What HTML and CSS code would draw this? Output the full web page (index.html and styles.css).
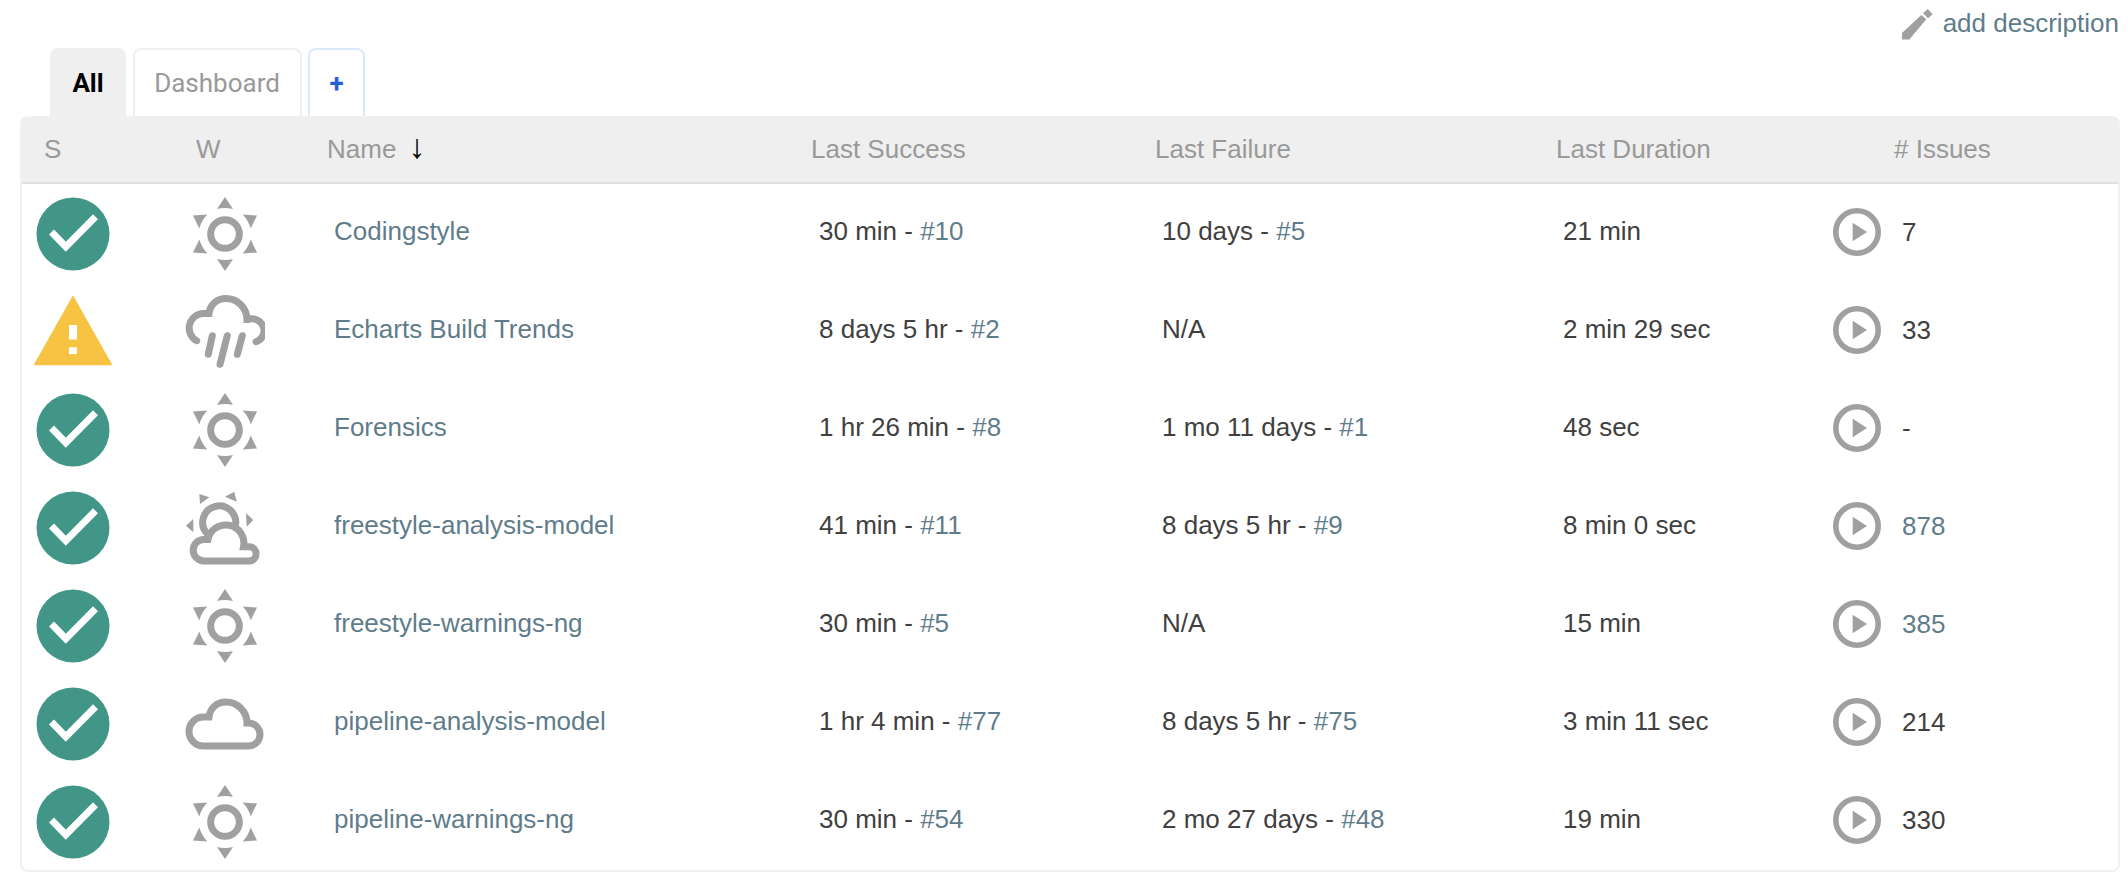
FILE: index.html
```html
<!DOCTYPE html>
<html lang="en">
<head>
    <meta charset="UTF-8">
    <title>All [Jenkins]</title>
    <link rel="stylesheet" href="styles.css">
</head>
<body>

    <svg class="sprites" width="0" height="0">
        <symbol id="ok" viewBox="0 0 80 80">
            <circle cx="40" cy="40" r="36.5" fill="#419688"/>
            <polyline points="18.5,38 32.8,52.7 62.5,22.7" fill="none" stroke="#fff" stroke-width="7"/>
        </symbol>
        <symbol id="warn" viewBox="0 0 80 80">
            <polygon points="40,3.3 79.5,73.3 0.5,73.3" fill="#f6c343"/>
            <rect x="36" y="33" width="8" height="14.5" fill="#fff"/>
            <rect x="36" y="55.3" width="8" height="6.8" fill="#fff"/>
        </symbol>
        <symbol id="sun" viewBox="0 0 80 80">
            <circle cx="40" cy="40" r="14.3" fill="none" stroke="#a0a0a0" stroke-width="7"/>
            <g fill="#a0a0a0">
                <path id="ray" d="M40 3 L48 15 Q40 13 32 15 Z"/>
                <use href="#ray" transform="rotate(60 40 40)"/>
                <use href="#ray" transform="rotate(120 40 40)"/>
                <use href="#ray" transform="rotate(180 40 40)"/>
                <use href="#ray" transform="rotate(240 40 40)"/>
                <use href="#ray" transform="rotate(300 40 40)"/>
            </g>
        </symbol>
        <symbol id="cloud" viewBox="0 0 80 80">
            <path d="M18.5 62 A14.5 14.5 0 0 1 18.5 33 H24 C25 24 32 18 41 18 A21 21 0 0 1 62 39 H63.5 A11.5 11.5 0 0 1 63.5 62 Z" fill="none" stroke="#a0a0a0" stroke-width="7"/>
        </symbol>
        <symbol id="rain" viewBox="0 0 80 80">
            <g fill="none" stroke="#a0a0a0" stroke-width="7" stroke-linecap="round">
                <path d="M11.7 48.7 A14.5 14.5 0 0 1 18.5 21.5 H24 C25 12.5 32 6.5 41 6.5 A21 21 0 0 1 62 27.5 H63.5 A11.5 11.5 0 0 1 71 49.7"/>
                <path d="M27.3 43.7 L23.3 62.3"/>
                <path d="M42.3 43.7 L35 72.3"/>
                <path d="M57.3 43.7 L52.3 62.3"/>
            </g>
        </symbol>
        <symbol id="partly" viewBox="0 0 80 80">
            <g fill="none" stroke="#a0a0a0" stroke-width="7">
                <path d="M22.5 46 A16.5 16.5 0 1 1 50.3 38"/>
                <path d="M19 73 A10.8 10.8 0 0 1 19 51.4 H23 A18 18 0 0 1 58.5 58.7 H64.8 A7.2 7.2 0 0 1 64.8 73 Z"/>
            </g>
            <g fill="#a0a0a0">
                <polygon points="14.3,6 24.3,9.3 15,16"/>
                <polygon points="40,8.7 49.3,3.7 51.7,13.7"/>
                <polygon points="61,25.3 68.3,32 61.7,38.7"/>
                <polygon points="8.3,31 1,37.7 8.3,44.3"/>
            </g>
        </symbol>
        <symbol id="play" viewBox="0 0 48 48">
            <circle cx="24" cy="24" r="21.2" fill="none" stroke="#a0a0a0" stroke-width="5.6"/>
            <polygon points="19.7,14.7 34,24 19.7,33.3" fill="#a0a0a0"/>
        </symbol>
    </svg>

    <div class="desc-row">
        <a class="add-desc">
            <svg class="pencil" viewBox="0 0 32 32">
                <polygon points="0,24 19.3,6 24.3,10.3 7.3,30.5 0,30.5" fill="#a0a0a0"/>
                <polygon points="21,4.3 25.7,0 30.7,5.3 26,9.3" fill="#a0a0a0"/>
            </svg>
            add description
        </a>
    </div>

    <div class="tabs">
        <div class="tab active">All</div>
        <div class="tab">Dashboard</div>
        <div class="tab new">+</div>
    </div>

    <table class="jobs">
        <colgroup>
            <col class="c-s"><col class="c-w"><col class="c-name"><col class="c-succ"><col class="c-fail"><col class="c-dur"><col>
        </colgroup>
        <thead>
            <tr>
                <th class="th-s">S</th>
                <th>W</th>
                <th>Name <span class="sort">↓</span></th>
                <th>Last Success</th>
                <th>Last Failure</th>
                <th>Last Duration</th>
                <th class="th-issues"># Issues</th>
            </tr>
        </thead>
        <tbody>
            <tr>
                <td class="icon"><svg class="ic"><use href="#ok"/></svg></td>
                <td class="icon"><svg class="ic"><use href="#sun"/></svg></td>
                <td><a>Codingstyle</a></td>
                <td>30 min - <a>#10</a></td>
                <td>10 days - <a>#5</a></td>
                <td>21 min</td>
                <td class="issues"><div class="issue-box"><svg class="play"><use href="#play"/></svg>7</div></td>
            </tr>
            <tr>
                <td class="icon"><svg class="ic"><use href="#warn"/></svg></td>
                <td class="icon"><svg class="ic"><use href="#rain"/></svg></td>
                <td><a>Echarts Build Trends</a></td>
                <td>8 days 5 hr - <a>#2</a></td>
                <td>N/A</td>
                <td>2 min 29 sec</td>
                <td class="issues"><div class="issue-box"><svg class="play"><use href="#play"/></svg>33</div></td>
            </tr>
            <tr>
                <td class="icon"><svg class="ic"><use href="#ok"/></svg></td>
                <td class="icon"><svg class="ic"><use href="#sun"/></svg></td>
                <td><a>Forensics</a></td>
                <td>1 hr 26 min - <a>#8</a></td>
                <td>1 mo 11 days - <a>#1</a></td>
                <td>48 sec</td>
                <td class="issues"><div class="issue-box"><svg class="play"><use href="#play"/></svg>-</div></td>
            </tr>
            <tr>
                <td class="icon"><svg class="ic"><use href="#ok"/></svg></td>
                <td class="icon"><svg class="ic"><use href="#partly"/></svg></td>
                <td><a>freestyle-analysis-model</a></td>
                <td>41 min - <a>#11</a></td>
                <td>8 days 5 hr - <a>#9</a></td>
                <td>8 min 0 sec</td>
                <td class="issues"><div class="issue-box"><svg class="play"><use href="#play"/></svg><a>878</a></div></td>
            </tr>
            <tr>
                <td class="icon"><svg class="ic"><use href="#ok"/></svg></td>
                <td class="icon"><svg class="ic"><use href="#sun"/></svg></td>
                <td><a>freestyle-warnings-ng</a></td>
                <td>30 min - <a>#5</a></td>
                <td>N/A</td>
                <td>15 min</td>
                <td class="issues"><div class="issue-box"><svg class="play"><use href="#play"/></svg><a>385</a></div></td>
            </tr>
            <tr>
                <td class="icon"><svg class="ic"><use href="#ok"/></svg></td>
                <td class="icon"><svg class="ic"><use href="#cloud"/></svg></td>
                <td><a>pipeline-analysis-model</a></td>
                <td>1 hr 4 min - <a>#77</a></td>
                <td>8 days 5 hr - <a>#75</a></td>
                <td>3 min 11 sec</td>
                <td class="issues"><div class="issue-box"><svg class="play"><use href="#play"/></svg>214</div></td>
            </tr>
            <tr>
                <td class="icon"><svg class="ic"><use href="#ok"/></svg></td>
                <td class="icon"><svg class="ic"><use href="#sun"/></svg></td>
                <td><a>pipeline-warnings-ng</a></td>
                <td>30 min - <a>#54</a></td>
                <td>2 mo 27 days - <a>#48</a></td>
                <td>19 min</td>
                <td class="issues"><div class="issue-box"><svg class="play"><use href="#play"/></svg>330</div></td>
            </tr>
        </tbody>
    </table>

</body>
</html>
```
FILE: styles.css
```css
* {
    margin: 0;
    padding: 0;
    box-sizing: border-box;
}
body {
    font-family: "Liberation Sans", sans-serif;
    font-size: 26px;
    color: #404040;
    background: #fff;
}
a {
    color: #5f7c8a;
}
.sprites {
    position: absolute;
}

.desc-row {
    height: 48px;
    display: flex;
    justify-content: flex-end;
    padding-right: 9px;
}
.add-desc {
    display: flex;
    align-items: flex-start;
    gap: 9px;
    padding-top: 9px;
    line-height: 28px;
}
.pencil {
    width: 32px;
    height: 32px;
}

.tabs {
    display: flex;
    gap: 6.5px;
    padding-left: 50px;
    height: 68px;
}
.tab {
    width: 169px;
    text-align: center;
    font-family: Roboto, sans-serif;
    font-size: 26px;
    color: #999;
    line-height: 66px;
    border: 2px solid #f0f0f0;
    border-bottom: none;
    border-radius: 8px 8px 0 0;
}
.tab.active {
    width: 76px;
    font-weight: 700;
    color: #000;
    background: #efefef;
    border-color: #efefef;
}
.tab.new {
    width: 57px;
    font-weight: 700;
    color: #2561d0;
    border-color: #d8eafc;
}

.jobs {
    width: 2100px;
    margin-left: 20px;
    table-layout: fixed;
    border-collapse: separate;
    border-spacing: 0;
    border: 2px solid #f0f0f0;
    border-radius: 8px;
}
.c-s { width: 162px; }
.c-w { width: 131px; }
.c-name { width: 484px; }
.c-succ { width: 344px; }
.c-fail { width: 401px; }
.c-dur { width: 276px; }

.jobs th {
    height: 66px;
    padding-left: 12px;
    padding-bottom: 2px;
    text-align: left;
    font-weight: 400;
    color: #999;
    background: #efefef;
    border-bottom: 2px solid #e0e0e0;
}
.jobs th.th-s {
    padding-left: 22px;
}
.jobs th.th-issues {
    padding-left: 74px;
}
.sort {
    display: inline-block;
    font-size: 34px;
    line-height: 20px;
    color: #000;
    margin-left: 5px;
}

.jobs td {
    height: 98px;
    padding-left: 19px;
    padding-bottom: 4px;
    white-space: nowrap;
}
.jobs td:nth-child(4) {
    padding-left: 20px;
}
.jobs td.icon {
    padding-left: 0;
    padding-top: 2px;
    padding-bottom: 0;
}
.ic {
    display: block;
    width: 80px;
    height: 80px;
}
.jobs td.icon:first-child .ic {
    margin-left: 11px;
}
.jobs td.icon:nth-child(2) .ic {
    margin-left: 1px;
}
.issue-box {
    display: flex;
    align-items: center;
    gap: 21px;
}
.jobs td.issues {
    padding-left: 13px;
    padding-bottom: 2px;
}
.play {
    width: 48px;
    height: 48px;
}
```
